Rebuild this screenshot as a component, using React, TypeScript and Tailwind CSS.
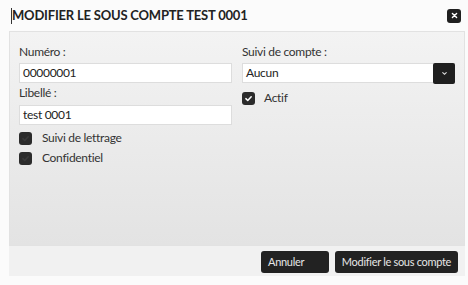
function Check({ on }: { on?: boolean }) {
  return (
    <span className="flex h-[13px] w-[13px] items-center justify-center rounded-[3px] bg-[#2b2b2b]">
      <svg viewBox="0 0 12 12" className="h-[9px] w-[9px]">
        <path d="M2.5 6.2 L5 8.6 L9.6 3.6" fill="none" stroke={on ? "#ffffff" : "#3a3a3a"} strokeWidth="2" strokeLinecap="round" strokeLinejoin="round" />
      </svg>
    </span>
  )
}

export default function App() {
  return (
    <div className="h-[285px] w-[468px] bg-[#fbfbfb] text-[#333] font-['Lato','Noto_Sans',sans-serif] text-[12px] tracking-[-0.3px]">
      {/* Title bar */}
      <div className="flex h-[31px] items-center justify-between pl-[11px] pr-[7px]">
        <div className="flex items-center">
          <span className="h-[16px] w-px bg-[#333]" />
          <h1 className="text-[13px] font-bold tracking-[-0.2px] text-[#222]">MODIFIER LE SOUS COMPTE TEST 0001</h1>
        </div>
        <button className="flex h-[14px] w-[14px] items-center justify-center rounded-[3px] bg-[#1f1f1f]">
          <svg viewBox="0 0 10 10" className="h-[7px] w-[7px]">
            <path d="M2 2 L8 8 M8 2 L2 8" stroke="#fff" strokeWidth="2" strokeLinecap="round" />
          </svg>
        </button>
      </div>

      {/* Body */}
      <div className="ml-[9px] flex h-[215px] w-[456px] gap-[10px] border border-[#e2e2e2] bg-gradient-to-b from-[#f3f3f3] to-[#e3e3e3] px-[9px] pt-[12px]">
        <div className="flex w-[213px] shrink-0 flex-col">
          <label className="mb-[3px] leading-[16px]">Numéro :</label>
          <div className="flex h-[20px] items-center border border-[#ddd] bg-white px-[3px] text-[#222]">00000001</div>
          <label className="mt-[2px] mb-[4px] leading-[16px]">Libellé :</label>
          <div className="flex h-[20px] items-center border border-[#ddd] bg-white px-[3px] text-[#222]">test 0001</div>
          <div className="mt-[5px] flex items-center gap-[10px] leading-[16px]">
            <Check />
            <span>Suivi de lettrage</span>
          </div>
          <div className="mt-[4px] flex items-center gap-[10px] leading-[16px]">
            <Check />
            <span>Confidentiel</span>
          </div>
        </div>
        <div className="flex w-[213px] shrink-0 flex-col">
          <label className="mb-[3px] leading-[16px]">Suivi de compte :</label>
          <div className="flex h-[20px] items-center border border-[#ddd] bg-white">
            <span className="flex-1 px-[3px] text-[#222]">Aucun</span>
            <span className="-mr-px flex h-[21px] w-[22px] items-center justify-center rounded-[2px] bg-[#1f1f1f]">
              <svg viewBox="0 0 10 10" className="h-[7px] w-[7px]">
                <path d="M2.5 3.8 L5 6.2 L7.5 3.8" fill="none" stroke="#ddd" strokeWidth="1.6" strokeLinecap="round" />
              </svg>
            </span>
          </div>
          <div className="mt-[7px] flex items-center gap-[9px] leading-[16px]">
            <Check on />
            <span>Actif</span>
          </div>
        </div>
      </div>

      {/* Footer */}
      <div className="ml-[9px] flex h-[30px] w-[456px] items-center justify-end gap-[6px] bg-[#f1f1f1] pr-[7px] pt-[2px]">
        <button className="h-[22px] w-[68px] rounded-[3px] bg-[#222] pl-[7px] text-left text-[11px] text-[#e6e6e6]">Annuler</button>
        <button className="h-[22px] w-[123px] rounded-[3px] bg-[#222] text-[11px] text-[#e6e6e6]">Modifier le sous compte</button>
      </div>
    </div>
  )
}
